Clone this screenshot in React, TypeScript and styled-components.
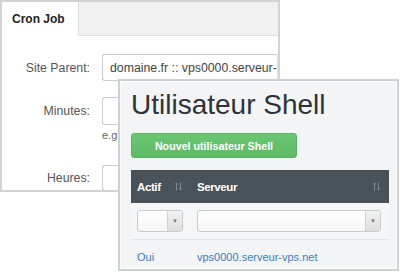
import styled, { createGlobalStyle } from 'styled-components';

const GlobalStyle = createGlobalStyle`
  html, body {
    margin: 0;
    padding: 0;
    background: #ffffff;
  }

  body {
    font-family: 'Liberation Sans', Arial, sans-serif;
  }
`;

const Stage = styled.div`
  position: relative;
  width: 400px;
  height: 272px;
  overflow: hidden;
  background: #ffffff;
`;

// Back window: the cron job form.
const BackCard = styled.div`
  position: absolute;
  left: 0;
  top: 0;
  width: 280px;
  height: 192px;
  box-sizing: border-box;
  border: 2px solid #d3d3d3;
  background: #ffffff;
  overflow: hidden;
`;

const TabBar = styled.div`
  display: flex;
  height: 33px;
  background: #f1f1f1;
  border-bottom: 1px solid #dedede;
`;

const Tab = styled.div`
  display: flex;
  align-items: center;
  width: 66px;
  padding-left: 10px;
  margin-bottom: -1px;
  background: #ffffff;
  border-right: 1px solid #dcdcdc;
  font-size: 12px;
  font-weight: bold;
  color: #222;
`;

const Form = styled.div`
  display: grid;
  grid-template-columns: 88px 1fr;
  column-gap: 12px;
  padding-top: 18px;
`;

const Label = styled.div<{ $height: number }>`
  height: ${(p) => p.$height}px;
  display: flex;
  align-items: center;
  justify-content: flex-end;
  font-size: 12.3px;
  color: #555;
`;

const Field = styled.div`
  display: flex;
  flex-direction: column;
`;

const Input = styled.div<{ $height: number }>`
  height: ${(p) => p.$height}px;
  width: 176px;
  box-sizing: border-box;
  display: flex;
  align-items: center;
  padding-left: 7px;
  border: 1px solid #cccccc;
  border-right-color: #e4e4e4;
  border-radius: 3px 0 0 3px;
  font-size: 12.3px;
  color: #444;
  white-space: nowrap;
  overflow: hidden;
`;

const Hint = styled.div`
  font-size: 11px;
  color: #666;
  margin-top: 4px;
`;

const Spacer = styled.div<{ $h: number }>`
  grid-column: 1 / -1;
  height: ${(p) => p.$h}px;
`;

// Front window: the shell users list.
const FrontCard = styled.div`
  position: absolute;
  left: 118px;
  top: 79px;
  width: 281px;
  height: 192px;
  box-sizing: border-box;
  border: 2px solid #cfd0d2;
  box-shadow: inset 0 0 0 1px #fbfbfc;
  background: #f3f4f6;
  padding: 8px 8px 0 11px;
  display: flex;
  flex-direction: column;
  overflow: hidden;

  & > * {
    flex-shrink: 0;
  }
`;

const Title = styled.h1`
  margin: 0;
  font-size: 28px;
  line-height: 32px;
  font-weight: normal;
  color: #2e3338;
`;

const GreenButton = styled.div`
  margin-top: 12px;
  width: 166px;
  height: 25px;
  box-sizing: border-box;
  display: flex;
  align-items: center;
  justify-content: center;
  border-radius: 3px;
  background: linear-gradient(#6cc773, #5dba65);
  border: 1px solid #58b260;
  color: #ffffff;
  font-size: 10.7px;
  font-weight: bold;
`;

const Table = styled.div`
  margin-top: 12px;
  width: 258px;
  display: grid;
  grid-template-columns: 60px 1fr;
`;

const HeadCell = styled.div`
  height: 33px;
  background: #4a5259;
  color: #ffffff;
  display: flex;
  align-items: center;
  justify-content: space-between;
  padding: 0 9px 0 6px;
  font-size: 11.5px;
  font-weight: bold;
  letter-spacing: -0.4px;
`;

const FilterCell = styled.div`
  height: 36px;
  border-bottom: 1px solid #e3e5e8;
  background: #f5f6f7;
  display: flex;
  align-items: center;
  padding: 0 8px 0 6px;
`;

const Select = styled.div`
  flex: 1;
  height: 22px;
  box-sizing: border-box;
  display: flex;
  border: 1px solid #cbcbcb;
  border-radius: 3px;
  background: linear-gradient(#ffffff, #f6f6f6);
  overflow: hidden;
`;

const SelectBody = styled.div`
  flex: 1;
`;

const SelectArrow = styled.div`
  width: 14px;
  display: flex;
  align-items: center;
  justify-content: center;
  border-left: 1px solid #d3d3d3;
  background: linear-gradient(#f2f2f2, #dedede);
  color: #777;
  font-size: 6px;
`;

const DataCell = styled.div`
  height: 34px;
  display: flex;
  align-items: center;
  padding-left: 6px;
  font-size: 11px;
  color: #3a7dc0;
`;

function SortIcon() {
  return (
    <svg width="7" height="9" viewBox="0 0 7 9">
      <g stroke="#7f888f" strokeWidth="1" fill="none">
        <path d="M1.5 8.5V1M0 2.5L1.5 1L3 2.5" />
        <path d="M5.5 0.5V8M4 6.5L5.5 8L7 6.5" />
      </g>
    </svg>
  );
}

function Dropdown() {
  return (
    <Select>
      <SelectBody />
      <SelectArrow>▼</SelectArrow>
    </Select>
  );
}

export default function App() {
  return (
    <Stage>
      <GlobalStyle />
      <BackCard>
        <TabBar>
          <Tab>Cron Job</Tab>
        </TabBar>
        <Form>
          <Label $height={27}>Site Parent:</Label>
          <Input $height={27}>domaine.fr :: vps0000.serveur-vps.net</Input>
          <Spacer $h={16} />
          <Label $height={28}>Minutes:</Label>
          <Field>
            <Input $height={28} />
            <Hint>e.g. */5</Hint>
          </Field>
          <Spacer $h={24} />
          <Label $height={26}>Heures:</Label>
          <Input $height={26} />
        </Form>
      </BackCard>

      <FrontCard>
        <Title>Utilisateur Shell</Title>
        <GreenButton>Nouvel utilisateur Shell</GreenButton>
        <Table>
          <HeadCell>
            Actif
            <SortIcon />
          </HeadCell>
          <HeadCell>
            Serveur
            <SortIcon />
          </HeadCell>
          <FilterCell>
            <Dropdown />
          </FilterCell>
          <FilterCell>
            <Dropdown />
          </FilterCell>
          <DataCell>Oui</DataCell>
          <DataCell>vps0000.serveur-vps.net</DataCell>
        </Table>
      </FrontCard>
    </Stage>
  );
}
